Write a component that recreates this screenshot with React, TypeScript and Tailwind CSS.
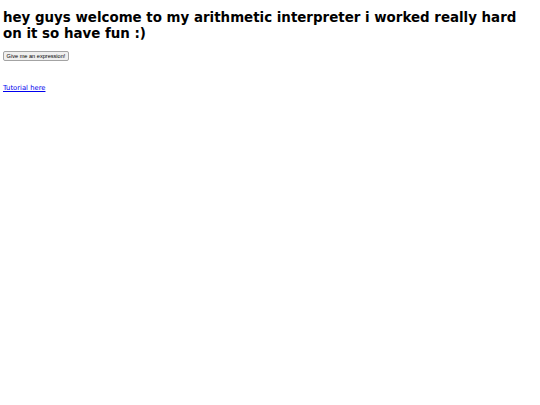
export default function App() {
  return (
    <div
      className="flex min-h-screen flex-col items-start bg-white px-[3px] pt-[3px] text-[6.8px] leading-[8px] text-black"
      style={{ fontFamily: '"DejaVu Sans", sans-serif' }}
    >
      <h1 className="mt-[7px] mb-[9px] text-[13.4px] leading-[16px] font-bold">
        hey guys welcome to my arithmetic interpreter i worked really hard on it so have fun :)
      </h1>
      <button
        className="flex h-[10px] w-[66px] items-center justify-center rounded-[2px] border border-[#a3a3a3] bg-[#efefef] text-[5.6px] leading-[7px] text-black"
        style={{ fontFamily: '"Liberation Sans", Arial, sans-serif' }}
      >
        Give me an expression!
      </button>
      <a href="#" className="mt-[23px] text-[#0000ee] underline">
        Tutorial here
      </a>
    </div>
  );
}
